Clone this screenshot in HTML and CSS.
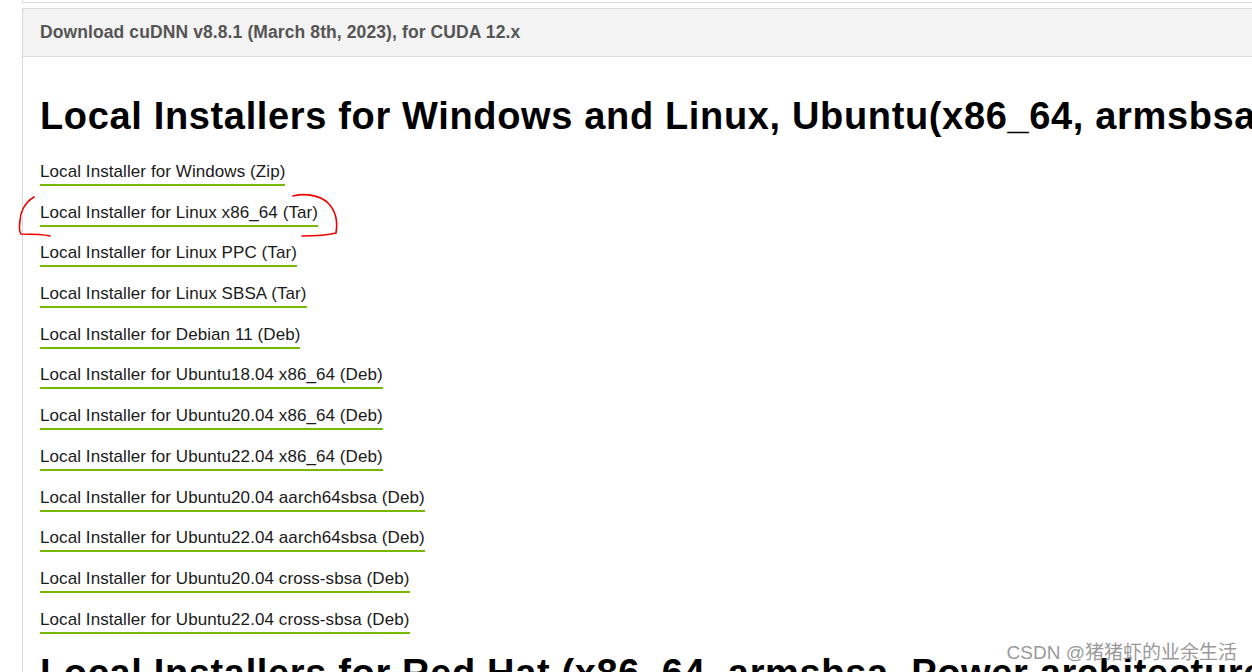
FILE: index.html
```html
<!DOCTYPE html>
<html lang="en">
<head>
  <meta charset="UTF-8">
  <title>cuDNN Archive</title>
  <link rel="stylesheet" href="styles.css">
</head>
<body>

<div class="page">
  <div class="prev-panel"></div>

  <div class="panel">
    <div class="panel-head">Download cuDNN v8.8.1 (March 8th, 2023), for CUDA 12.x</div>
    <div class="panel-body">
      <h2>Local Installers for Windows and Linux, Ubuntu(x86_64, armsbsa)</h2>
      <ul class="links">
        <li><a href="#">Local Installer for Windows (Zip)</a></li>
        <li class="marked"><a href="#">Local Installer for Linux x86_64 (Tar)</a>
          <svg class="pen" width="360" height="60" viewBox="0 0 360 60">
            <path d="M34 6 C24 12 20 22 20 30 C19 36 19 40 21 43 C30 43 42 43 50 45" />
            <path d="M293 5 C305 2 320 4 328 12 C336 20 338 30 336 42 C325 45 312 45 302 45" />
          </svg>
        </li>
        <li><a href="#">Local Installer for Linux PPC (Tar)</a></li>
        <li><a href="#">Local Installer for Linux SBSA (Tar)</a></li>
        <li><a href="#">Local Installer for Debian 11 (Deb)</a></li>
        <li><a href="#">Local Installer for Ubuntu18.04 x86_64 (Deb)</a></li>
        <li><a href="#">Local Installer for Ubuntu20.04 x86_64 (Deb)</a></li>
        <li><a href="#">Local Installer for Ubuntu22.04 x86_64 (Deb)</a></li>
        <li><a href="#">Local Installer for Ubuntu20.04 aarch64sbsa (Deb)</a></li>
        <li><a href="#">Local Installer for Ubuntu22.04 aarch64sbsa (Deb)</a></li>
        <li><a href="#">Local Installer for Ubuntu20.04 cross-sbsa (Deb)</a></li>
        <li><a href="#">Local Installer for Ubuntu22.04 cross-sbsa (Deb)</a></li>
      </ul>
      <h2 class="next">Local Installers for Red Hat (x86_64, armsbsa, Power architecture)</h2>
    </div>
  </div>
</div>

<div class="watermark">CSDN @猪猪虾的业余生活</div>

</body>
</html>
```

FILE: styles.css
```css
html, body { margin: 0; overflow: hidden; }
body {
  font-family: "Liberation Sans", Arial, "Noto Sans CJK SC", sans-serif;
  background: #fff;
  color: #1a1a1a;
  height: 672px;
}
.page { padding-left: 22px; white-space: nowrap; }
.prev-panel {
  height: 2px;
  border-left: 1px solid #d8d8d8;
  border-bottom: 1px solid #d8d8d8;
}
.panel {
  margin-top: 5px;
  border-left: 1px solid #d8d8d8;
}
.panel-head {
  background: #f3f3f3;
  border-top: 1px solid #dcdcdc;
  border-bottom: 1px solid #dcdcdc;
  height: 47px;
  line-height: 46px;
  padding-left: 17px;
  font-size: 17.5px;
  letter-spacing: 0.1px;
  font-weight: bold;
  color: #555;
}
.panel-body { padding: 0 0 0 17px; }
h2 {
  margin: 36px 0 22px;
  font-size: 38px;
  line-height: 46px;
  letter-spacing: 0.65px;
  color: #000;
}
h2.next { margin-top: 1px; }
.links {
  list-style: none;
  margin: 0;
  padding: 0;
}
.links li {
  height: 40.7px;
  position: relative;
}
.links a {
  display: inline-block;
  font-size: 17px;
  line-height: 22px;
  letter-spacing: 0.08px;
  color: #1a1a1a;
  text-decoration: none;
  border-bottom: 2px solid #76b900;
  padding-bottom: 1px;
}
.pen {
  position: absolute;
  left: -40px;
  top: -11px;
  fill: none;
  stroke: #ee0000;
  stroke-width: 1.6;
  stroke-linecap: round;
}
.watermark {
  position: absolute;
  right: 15px;
  top: 637px;
  font-size: 19px;
  color: #9a9a9a;
  font-family: "Liberation Sans", "Noto Sans CJK SC", sans-serif;
}
```
